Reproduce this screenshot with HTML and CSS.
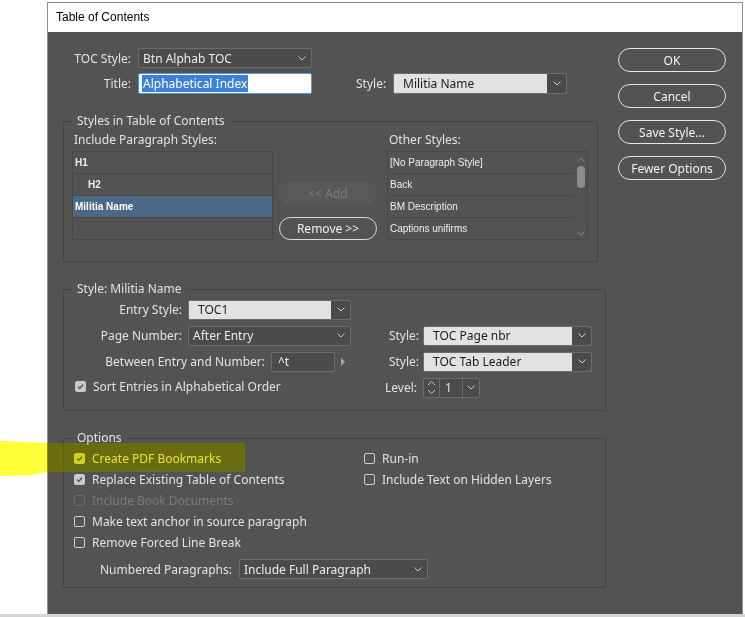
FILE: index.html
```html
<!DOCTYPE html>
<html>
<head>
<meta charset="utf-8">
<link rel="stylesheet" href="styles.css">
</head>
<body>
<div class="page">
  <div class="dialog">
    <div class="titlebar">Table of Contents</div>
    <div class="body">
      <div class="main">
        <div class="top-form">
          <div class="row r1">
            <span class="lbl toc-lbl">TOC Style:</span>
            <div class="select dark w174"><span class="val">Btn Alphab TOC</span><span class="chev"><svg width="8" height="5" viewBox="0 0 8 5"><path d="M0.5 0.5 L4 4 L7.5 0.5" fill="none" stroke="#c8c8c8" stroke-width="1"/></svg></span></div>
          </div>
          <div class="row r2">
            <span class="lbl toc-lbl">Title:</span>
            <div class="textinput"><span class="selected">Alphabetical Index</span></div>
            <span class="lbl style-lbl">Style:</span>
            <div class="select light w174"><span class="val">Militia Name</span><span class="chevbox"><svg width="8" height="5" viewBox="0 0 8 5"><path d="M0.5 0.5 L4 4 L7.5 0.5" fill="none" stroke="#d0d0d0" stroke-width="1"/></svg></span></div>
          </div>
        </div>

        <fieldset class="group g1">
          <legend>Styles in Table of Contents</legend>
          <div class="g1-cols">
            <div class="col">
              <div class="col-lbl">Include Paragraph Styles:</div>
              <div class="list">
                <div class="item strong">H1</div>
                <div class="item strong indent">H2</div>
                <div class="item strong selrow">Militia Name</div>
                <div class="item last"></div>
              </div>
            </div>
            <div class="mid">
              <div class="btn disabled">&lt;&lt; Add</div>
              <div class="btn outline">Remove &gt;&gt;</div>
            </div>
            <div class="col">
              <div class="col-lbl">Other Styles:</div>
              <div class="list scroll">
                <div class="items">
                  <div class="item">[No Paragraph Style]</div>
                  <div class="item">Back</div>
                  <div class="item">BM Description</div>
                  <div class="item last">Captions unifirms</div>
                </div>
                <div class="scrollbar">
                  <svg width="8" height="5" viewBox="0 0 8 5"><path d="M0.5 4.5 L4 1 L7.5 4.5" fill="none" stroke="#8a8a8a"/></svg>
                  <div class="thumb"></div>
                  <div class="spacer"></div>
                  <svg width="8" height="5" viewBox="0 0 8 5"><path d="M0.5 0.5 L4 4 L7.5 0.5" fill="none" stroke="#8a8a8a"/></svg>
                </div>
              </div>
            </div>
          </div>
        </fieldset>

        <fieldset class="group g2">
          <legend>Style: Militia Name</legend>
          <div class="g2-grid">
            <div class="cell">
              <span class="lbl w110">Entry Style:</span>
              <div class="select light w163"><span class="val">TOC1</span><span class="chevbox"><svg width="8" height="5" viewBox="0 0 8 5"><path d="M0.5 0.5 L4 4 L7.5 0.5" fill="none" stroke="#d0d0d0"/></svg></span></div>
            </div>
            <div class="cell"></div>
            <div class="cell">
              <span class="lbl w110">Page Number:</span>
              <div class="select dark w163"><span class="val">After Entry</span><span class="chev"><svg width="8" height="5" viewBox="0 0 8 5"><path d="M0.5 0.5 L4 4 L7.5 0.5" fill="none" stroke="#c8c8c8"/></svg></span></div>
            </div>
            <div class="cell">
              <span class="lbl w35">Style:</span>
              <div class="select light w169"><span class="val">TOC Page nbr</span><span class="chevbox"><svg width="8" height="5" viewBox="0 0 8 5"><path d="M0.5 0.5 L4 4 L7.5 0.5" fill="none" stroke="#d0d0d0"/></svg></span></div>
            </div>
            <div class="cell">
              <span class="lbl w193">Between Entry and Number:</span>
              <div class="field w64">^t</div>
              <span class="tri"></span>
            </div>
            <div class="cell">
              <span class="lbl w35">Style:</span>
              <div class="select light w169"><span class="val">TOC Tab Leader</span><span class="chevbox"><svg width="8" height="5" viewBox="0 0 8 5"><path d="M0.5 0.5 L4 4 L7.5 0.5" fill="none" stroke="#d0d0d0"/></svg></span></div>
            </div>
            <div class="cell">
              <label class="check sort"><span class="box checked"><svg width="9" height="9" viewBox="0 0 9 9"><path d="M2 4.6 L3.8 6.4 L7 2.8" fill="none" stroke="#4a4a4a" stroke-width="1.3"/></svg></span>Sort Entries in Alphabetical Order</label>
            </div>
            <div class="cell">
              <span class="lbl w35 lvl">Level:</span>
              <div class="spinner">
                <span class="arrows"><svg width="9" height="15" viewBox="0 0 9 15"><path d="M1 5 L4.5 1.5 L8 5" fill="none" stroke="#c8c8c8"/><path d="M1 10 L4.5 13.5 L8 10" fill="none" stroke="#c8c8c8"/></svg></span>
                <span class="num">1</span>
                <span class="spchev"><svg width="8" height="5" viewBox="0 0 8 5"><path d="M0.5 0.5 L4 4 L7.5 0.5" fill="none" stroke="#c8c8c8"/></svg></span>
              </div>
            </div>
          </div>
        </fieldset>

        <fieldset class="group g3">
          <legend>Options</legend>
          <div class="g3-grid">
            <label class="check hl"><span class="box checked"><svg width="9" height="9" viewBox="0 0 9 9"><path d="M2 4.6 L3.8 6.4 L7 2.8" fill="none" stroke="#4a4a4a" stroke-width="1.3"/></svg></span>Create PDF Bookmarks</label>
            <label class="check"><span class="box"></span>Run-in</label>
            <label class="check"><span class="box checked"><svg width="9" height="9" viewBox="0 0 9 9"><path d="M2 4.6 L3.8 6.4 L7 2.8" fill="none" stroke="#4a4a4a" stroke-width="1.3"/></svg></span>Replace Existing Table of Contents</label>
            <label class="check"><span class="box"></span>Include Text on Hidden Layers</label>
            <label class="check off span2"><span class="box"></span>Include Book Documents</label>
            <label class="check span2"><span class="box"></span>Make text anchor in source paragraph</label>
            <label class="check span2"><span class="box"></span>Remove Forced Line Break</label>
          </div>
          <div class="numrow">
            <span class="lbl">Numbered Paragraphs:</span>
            <div class="select dark w189"><span class="val">Include Full Paragraph</span><span class="chev"><svg width="8" height="5" viewBox="0 0 8 5"><path d="M0.5 0.5 L4 4 L7.5 0.5" fill="none" stroke="#c8c8c8"/></svg></span></div>
          </div>
        </fieldset>
      </div>

      <div class="buttons">
        <div class="btn pill">OK</div>
        <div class="btn pill">Cancel</div>
        <div class="btn pill">Save Style...</div>
        <div class="btn pill">Fewer Options</div>
      </div>
    </div>
  </div>
  <div class="highlight"></div>
  <div class="highlight2"></div>
</div>
</body>
</html>
```

FILE: styles.css
```css
* { box-sizing: border-box; }
html, body { margin: 0; padding: 0; }
body {
  background: #ffffff;
  width: 745px;
  height: 617px;
  overflow: hidden;
  font-family: "Noto Sans", "Open Sans", sans-serif;
  font-size: 12px;
  color: #e2e2e2;
}
.page {
  position: relative;
  width: 745px;
  height: 617px;
  padding: 2px 2px 0 47px;
  border-bottom: 3px solid #d4d4d4;
}
.dialog {
  width: 696px;
  height: 612px;
  border: 1px solid #8f8f8f;
  border-bottom: none;
  display: flex;
  flex-direction: column;
  background: #535353;
}
.titlebar {
  height: 29px;
  background: #ffffff;
  color: #000;
  font-family: "Liberation Sans", Arial, sans-serif;
  font-size: 12px;
  line-height: 29px;
  padding-left: 8px;
  flex: none;
}
.body {
  flex: 1;
  display: flex;
  padding: 16px 0 0 15px;
  gap: 12px;
}
.main {
  width: 543px;
  display: flex;
  flex-direction: column;
}
.top-form {
  padding-left: 10px;
  display: flex;
  flex-direction: column;
  gap: 5px;
}
.row { display: flex; align-items: center; }
.r1 { height: 20px; }
.r2 { height: 21px; }
.lbl {
  text-align: right;
  white-space: nowrap;
  flex: none;
}
.toc-lbl { width: 58px; margin-right: 7px; }
.style-lbl { width: 30px; margin-left: 44px; margin-right: 7px; }

.select {
  height: 20px;
  display: flex;
  align-items: center;
  border-radius: 2px;
  flex: none;
  white-space: nowrap;
  overflow: hidden;
}
.r2 .select { height: 21px; }
.select .val { flex: 1; }
.select.dark {
  background: #4b4b4b;
  border: 1px solid #6c6c6c;
  color: #ececec;
  padding-left: 4px;
}
.select.dark .chev {
  width: 18px;
  display: flex;
  justify-content: center;
  align-items: center;
}
.select.light {
  background: #e2e2e2;
  border: 1px solid #6c6c6c;
  color: #1c1c1c;
  padding-left: 9px;
}
.select.light .chevbox {
  width: 19px;
  height: 100%;
  background: #4a4a4a;
  display: flex;
  justify-content: center;
  align-items: center;
}
.w174 { width: 174px; }
.w163 { width: 163px; }
.w169 { width: 169px; }
.w189 { width: 189px; }
.w110 { width: 110px; margin-right: 6px; }
.w193 { width: 193px; margin-right: 6px; }
.w35 { width: 35px; margin-right: 4px; }
.w35.lvl { width: 33px; margin-right: 6px; }
.w64 { width: 64px; }

.textinput {
  width: 174px;
  height: 21px;
  background: #ffffff;
  border: 1px solid #4a9be8;
  border-radius: 2px;
  padding-left: 3px;
  display: flex;
  align-items: center;
  flex: none;
}
.textinput .selected {
  background: #3d80d6;
  color: #ffffff;
  padding: 1px 1px;
  line-height: 15px;
}

/* fieldsets */
.group {
  margin: 0;
  border: 1px solid #444444;
  border-radius: 2px;
  min-width: 0;
  padding: 0 9px 0 8px;
}
.group legend {
  padding: 0 5px;
  line-height: 14px;
  font-size: 12px;
  color: #e2e2e2;
}
.g1 { width: 535px; margin-top: 20px; padding-top: 4px; padding-bottom: 21px; }
.g2 { width: 543px; margin-top: 20px; padding-top: 3px; padding-bottom: 12px; }
.g3 { width: 543px; margin-top: 20px; padding-top: 3px; padding-bottom: 8px; }

.g1-cols { display: flex; }
.col { width: 201px; display: flex; flex-direction: column; }
.col-lbl { line-height: 16px; padding-left: 2px; margin-bottom: 3px; }
.mid {
  width: 98px;
  margin: 0 10px 0 6px;
  display: flex;
  flex-direction: column;
  justify-content: flex-end;
}
.list {
  height: 89px;
  border: 1px solid #474747;
  display: flex;
  flex-direction: column;
  font-family: "Liberation Sans", Arial, sans-serif;
  font-size: 10px;
  color: #ededed;
}
.list .item {
  height: 22px;
  flex: none;
  border-bottom: 1px solid #474747;
  display: flex;
  align-items: center;
  padding-left: 2px;
  white-space: nowrap;
}
.list .item.last { border-bottom: none; flex: 1; }
.item.strong { font-weight: bold; }
.item.indent { padding-left: 15px; }
.item.selrow { background: #4b6886; color: #ffffff; }
.list.scroll { flex-direction: row; }
.items { flex: 1; display: flex; flex-direction: column; }
.scrollbar {
  width: 13px;
  display: flex;
  flex-direction: column;
  align-items: center;
  padding: 5px 0 3px;
}
.scrollbar .thumb {
  width: 8px;
  height: 22px;
  border-radius: 4px;
  background: #8c8c8c;
  margin-top: 4px;
}
.scrollbar .spacer { flex: 1; }

.btn {
  display: flex;
  align-items: center;
  justify-content: center;
  white-space: nowrap;
}
.btn.disabled {
  height: 22px;
  border-radius: 11px;
  background: #595959;
  color: #7c7c7c;
  margin-bottom: 13px;
}
.btn.outline {
  height: 23px;
  border-radius: 12px;
  border: 1px solid #dcdcdc;
  color: #f0f0f0;
}

/* style group */
.g2-grid {
  display: grid;
  grid-template-columns: 312px 1fr;
  grid-auto-rows: 21px;
  row-gap: 5px;
}
.cell { display: flex; align-items: center; }
.field {
  height: 20px;
  background: #4b4b4b;
  border: 1px solid #6c6c6c;
  border-radius: 2px;
  padding-left: 6px;
  line-height: 18px;
  color: #ececec;
}
.tri {
  width: 0;
  height: 0;
  border-top: 4px solid transparent;
  border-bottom: 4px solid transparent;
  border-left: 4px solid #a8a8a8;
  margin-left: 6px;
}
.spinner {
  height: 20px;
  width: 57px;
  border: 1px solid #6c6c6c;
  border-radius: 2px;
  display: flex;
  background: #4b4b4b;
}
.spinner .arrows {
  width: 16px;
  display: flex;
  align-items: center;
  justify-content: center;
  border-right: 1px solid #6c6c6c;
}
.spinner .num { width: 23px; padding-left: 5px; line-height: 18px; border-right: 1px solid #6c6c6c; }
.spinner .spchev { flex: 1; display: flex; align-items: center; justify-content: center; }

/* checkboxes */
.check {
  display: flex;
  align-items: center;
  white-space: nowrap;
  height: 21px;
}
.check .box {
  width: 11px;
  height: 11px;
  border: 1px solid #cfcfcf;
  border-radius: 2px;
  margin-left: 2px;
  margin-right: 7px;
  display: flex;
  align-items: center;
  justify-content: center;
  flex: none;
}
.check .box.checked { background: #c9c9c9; border-color: #c9c9c9; }
.check.sort { margin-top: -3px; }
.check.sort .box { margin-left: 3px; }
.check.off { color: #7b7b7b; }
.check.off .box { border-color: #6b6b6b; }
.g3-grid {
  display: grid;
  grid-template-columns: 290px 1fr;
  grid-auto-rows: 21px;
}
.span2 { grid-column: 1 / 3; }
.numrow {
  display: flex;
  align-items: center;
  margin-top: 6px;
  height: 20px;
  padding-left: 28px;
}
.numrow .lbl { margin-right: 7px; }

.buttons {
  width: 108px;
  display: flex;
  flex-direction: column;
  gap: 12px;
}
.btn.pill {
  height: 24px;
  border-radius: 12px;
  border: 1.5px solid #e6e6e6;
  color: #f2f2f2;
  font-size: 12px;
}

/* annotation highlighter stroke */
.highlight {
  position: absolute;
  left: 0;
  top: 440px;
  width: 246px;
  height: 36px;
  background: #ffff3a;
  mix-blend-mode: multiply;
  clip-path: polygon(0 2%, 12% 6%, 19% 8%, 60% 9%, 100% 9%, 99% 88%, 60% 86%, 19% 88%, 12% 98%, 0 100%);
}
.highlight2 {
  position: absolute;
  left: 48px;
  top: 443px;
  width: 197px;
  height: 29px;
  background: rgba(255, 255, 0, 0.14);
}
```
